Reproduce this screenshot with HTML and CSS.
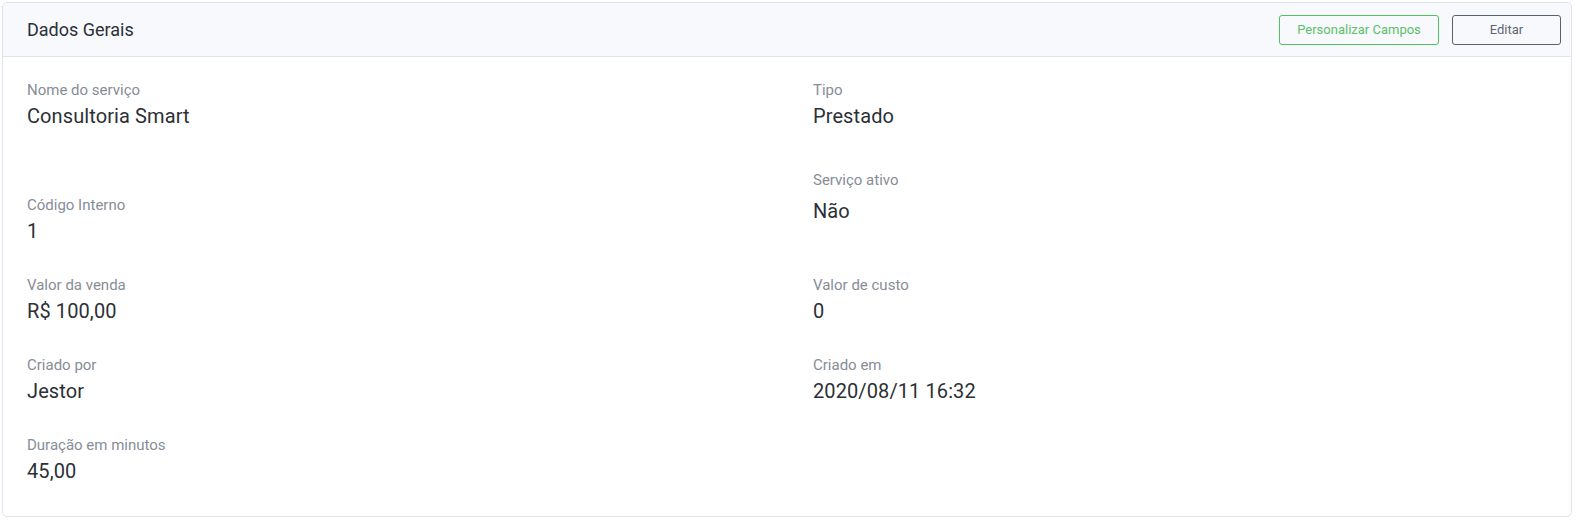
FILE: index.html
```html
<!DOCTYPE html>
<html lang="pt-BR">
<head>
<meta charset="utf-8">
<title>Dados Gerais</title>
<link rel="stylesheet" href="styles.css">
</head>
<body>
<section class="card">
  <header class="card-header">
    <h2 class="card-title">Dados Gerais</h2>
    <div class="actions">
      <button class="btn btn-green">Personalizar Campos</button>
      <button class="btn btn-dark">Editar</button>
    </div>
  </header>
  <div class="card-body">
    <div class="fields">
      <div class="field">
        <div class="label">Nome do serviço</div>
        <div class="value">Consultoria Smart</div>
      </div>
      <div class="field">
        <div class="label">Tipo</div>
        <div class="value">Prestado</div>
      </div>
      <div class="field field-spaced">
        <div class="label">Código Interno</div>
        <div class="value">1</div>
      </div>
      <div class="field field-toggle">
        <div class="label">Serviço ativo</div>
        <div class="value">Não</div>
      </div>
      <div class="field">
        <div class="label">Valor da venda</div>
        <div class="value">R$ 100,00</div>
      </div>
      <div class="field">
        <div class="label">Valor de custo</div>
        <div class="value">0</div>
      </div>
      <div class="field">
        <div class="label">Criado por</div>
        <div class="value">Jestor</div>
      </div>
      <div class="field">
        <div class="label">Criado em</div>
        <div class="value">2020/08/11 16:32</div>
      </div>
      <div class="field">
        <div class="label">Duração em minutos</div>
        <div class="value">45,00</div>
      </div>
    </div>
  </div>
</section>
</body>
</html>
```

FILE: styles.css
```css
* { box-sizing: border-box; }

html, body {
  margin: 0;
  padding: 0;
  background: #ffffff;
}

body {
  font-family: Roboto, "Liberation Sans", Arial, sans-serif;
  padding: 2px 4px 3px 2px;
}

.card {
  border: 1px solid #e1e3ec;
  border-radius: 5px;
  background: #ffffff;
  height: 515px;
  overflow: hidden;
}

.card-header {
  display: flex;
  align-items: center;
  justify-content: space-between;
  height: 54px;
  padding: 0 10px 0 24px;
  background: #f8f9fd;
  border-bottom: 1px solid #e1e3ec;
}

.card-title {
  margin: 0;
  font-size: 18px;
  font-weight: 400;
  color: #2b3036;
  line-height: 21px;
}

.actions {
  display: flex;
  gap: 13px;
}

.btn {
  font-family: Roboto, "Liberation Sans", Arial, sans-serif;
  font-size: 13px;
  height: 30px;
  border-radius: 3px;
  background: transparent;
  padding: 0;
  white-space: nowrap;
  text-align: center;
  cursor: pointer;
}

.btn-green {
  border: 1px solid #4fc45e;
  color: #5bc06a;
  width: 160px;
}

.btn-dark {
  border: 1px solid #596171;
  color: #5f6673;
  width: 109px;
}

.card-body {
  padding: 23px 24px 0 24px;
}

.fields {
  display: grid;
  grid-template-columns: 1fr 1fr;
  column-gap: 52px;
  row-gap: 30px;
}

.field {
  display: flex;
  flex-direction: column;
}

.label {
  font-size: 15px;
  line-height: 20px;
  color: #878d97;
  margin-bottom: 2px;
}

.value {
  font-size: 20px;
  line-height: 28px;
  color: #2c3036;
  letter-spacing: 0.1px;
}

.field-spaced {
  padding-top: 35px;
}

.field-toggle {
  padding-top: 10px;
}

.field-toggle .label {
  margin-bottom: 7px;
}
```
